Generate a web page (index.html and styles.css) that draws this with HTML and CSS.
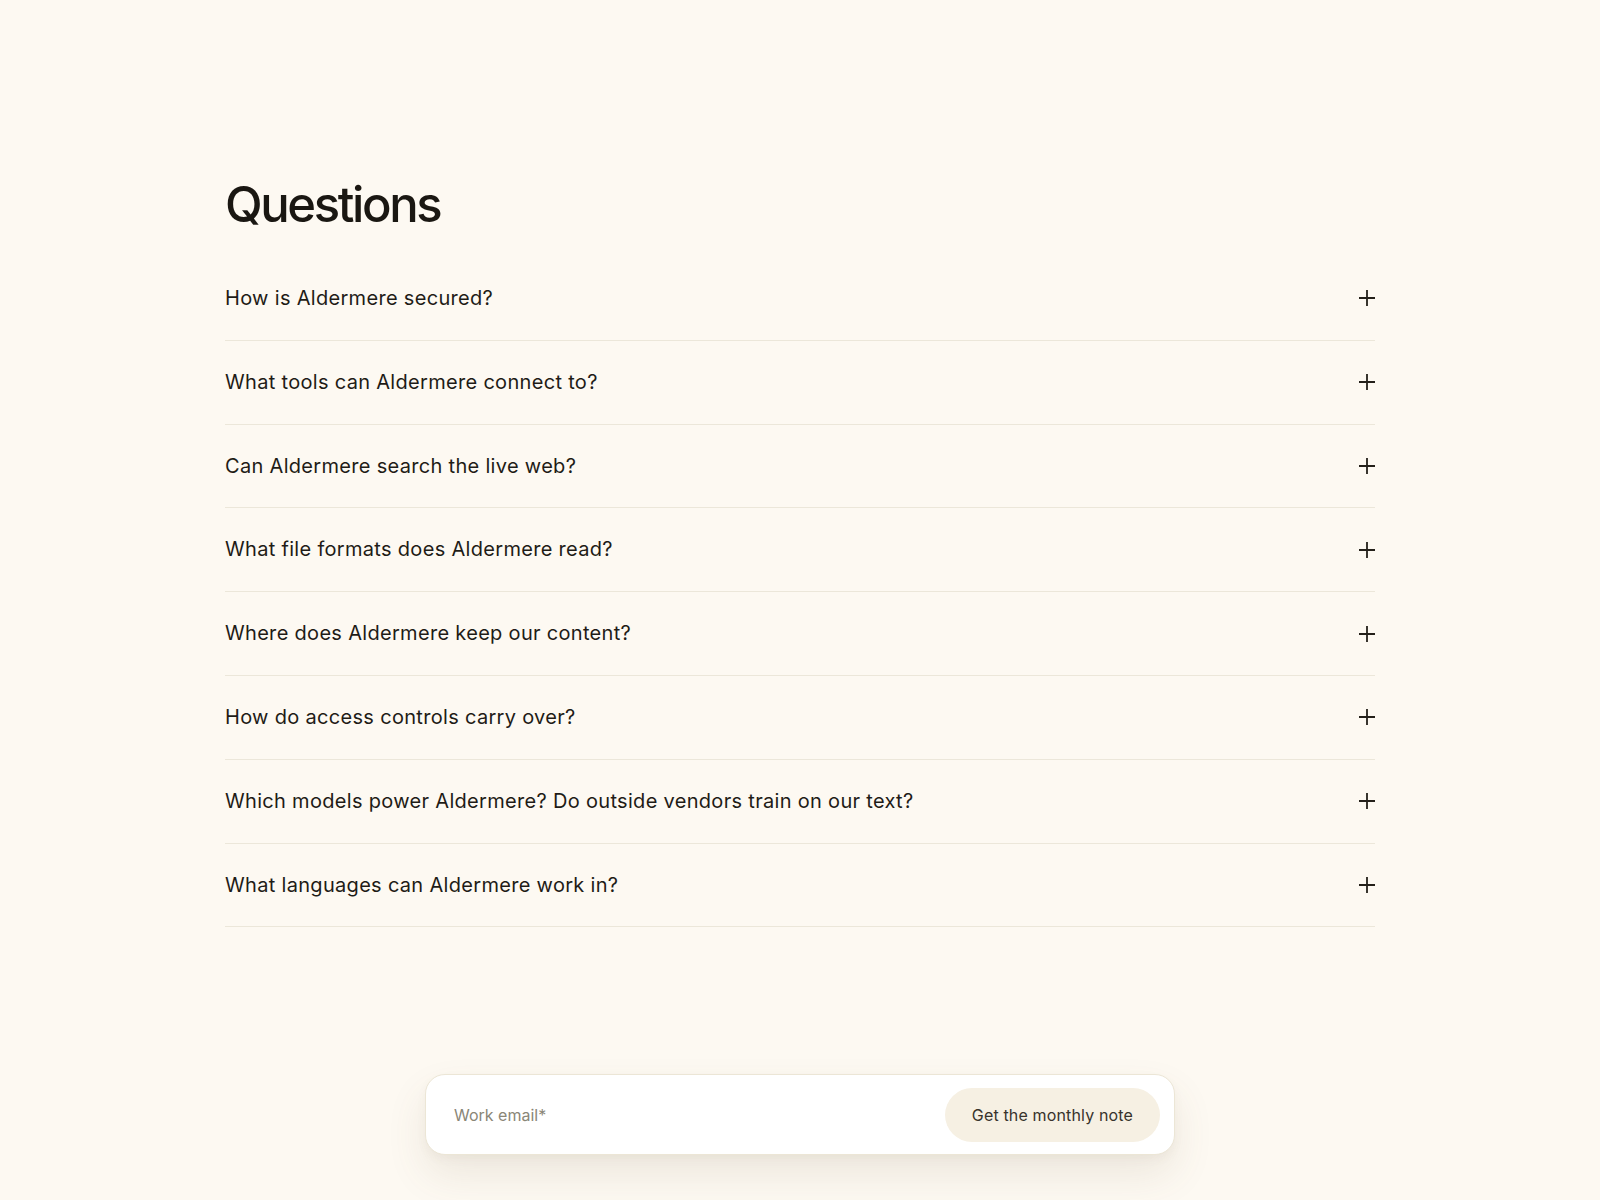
FILE: index.html
```html
<!DOCTYPE html>
<html lang="en">
<head>
<meta charset="utf-8">
<title>Questions</title>
<link rel="stylesheet" href="styles.css">
</head>
<body>
<main class="page">
  <section class="faq">
    <h1 class="faq-title">Questions</h1>
    <ul class="faq-list">
      <li class="faq-item"><span class="faq-q">How is Aldermere secured?</span><svg class="plus" viewBox="0 0 16 16"><path d="M0 8H16M8 0V16"/></svg></li>
      <li class="faq-item"><span class="faq-q">What tools can Aldermere connect to?</span><svg class="plus" viewBox="0 0 16 16"><path d="M0 8H16M8 0V16"/></svg></li>
      <li class="faq-item"><span class="faq-q">Can Aldermere search the live web?</span><svg class="plus" viewBox="0 0 16 16"><path d="M0 8H16M8 0V16"/></svg></li>
      <li class="faq-item"><span class="faq-q">What file formats does Aldermere read?</span><svg class="plus" viewBox="0 0 16 16"><path d="M0 8H16M8 0V16"/></svg></li>
      <li class="faq-item"><span class="faq-q">Where does Aldermere keep our content?</span><svg class="plus" viewBox="0 0 16 16"><path d="M0 8H16M8 0V16"/></svg></li>
      <li class="faq-item"><span class="faq-q">How do access controls carry over?</span><svg class="plus" viewBox="0 0 16 16"><path d="M0 8H16M8 0V16"/></svg></li>
      <li class="faq-item"><span class="faq-q">Which models power Aldermere? Do outside vendors train on our text?</span><svg class="plus" viewBox="0 0 16 16"><path d="M0 8H16M8 0V16"/></svg></li>
      <li class="faq-item"><span class="faq-q">What languages can Aldermere work in?</span><svg class="plus" viewBox="0 0 16 16"><path d="M0 8H16M8 0V16"/></svg></li>
    </ul>
  </section>
  <form class="signup">
    <input class="signup-input" type="email" placeholder="Work email*">
    <button class="signup-btn" type="button">Get the monthly note</button>
  </form>
</main>
</body>
</html>
```

FILE: styles.css
```css
* { box-sizing: border-box; }
html, body { margin: 0; padding: 0; }
body {
  background: #fdf9f2;
  font-family: Inter, "Noto Sans", sans-serif;
  color: #1c1914;
  height: 1200px;
  overflow: hidden;
}
.page {
  display: flex;
  flex-direction: column;
  align-items: center;
  padding-top: 176px;
}
.faq {
  width: 1150px;
}
.faq-title {
  margin: 0 0 23px;
  font-size: 49px;
  line-height: 58px;
  font-weight: 500;
  letter-spacing: -2.4px;
  color: #1a1712;
}
.faq-list {
  list-style: none;
  margin: 0;
  padding: 0;
}
.faq-item {
  display: flex;
  align-items: center;
  justify-content: space-between;
  padding: 28px 0;
  border-bottom: 1px solid #ece7da;
}
.faq-q {
  font-size: 20px;
  line-height: 26.8px;
  font-weight: 400;
  letter-spacing: 0.31px;
  color: #1f1c17;
}
.plus {
  width: 16px;
  height: 16px;
  flex: none;
  stroke: #24201a;
  stroke-width: 1.8;
  fill: none;
}
.signup {
  margin-top: 147px;
  width: 750px;
  height: 81px;
  background: #ffffff;
  border: 1px solid #ece6d6;
  border-radius: 20px;
  padding: 12px 14px 12px 28px;
  display: flex;
  align-items: center;
  gap: 16px;
  box-shadow: 0 20px 40px rgba(110, 95, 60, 0.11), 0 4px 10px rgba(110, 95, 60, 0.05);
}
.signup-input {
  flex: 1;
  border: none;
  outline: none;
  background: transparent;
  font-family: inherit;
  font-size: 16px;
  color: #1f1c17;
  padding: 0;
}
.signup-input::placeholder {
  color: #8a8677;
}
.signup-btn {
  flex: none;
  height: 54px;
  padding: 0 27px;
  border: none;
  border-radius: 27px;
  background: #f6f0e3;
  font-family: inherit;
  font-size: 16px;
  letter-spacing: 0.15px;
  color: #38332c;
  cursor: pointer;
}
```
